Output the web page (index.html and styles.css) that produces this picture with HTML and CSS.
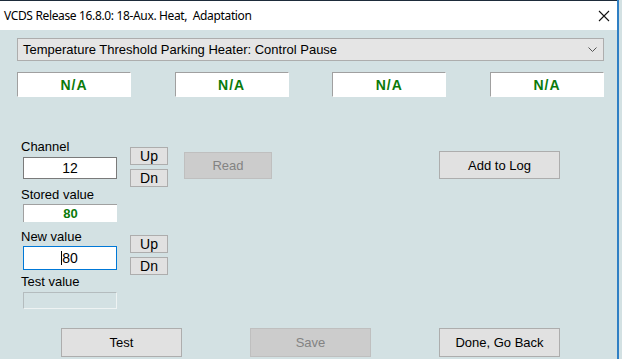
FILE: index.html
```html
<!DOCTYPE html>
<html>
<head>
<meta charset="utf-8">
<link rel="stylesheet" href="styles.css">
</head>
<body>
<div class="window">
  <div class="titlebar">
    <span class="title">VCDS Release 16.8.0: 18-Aux. Heat,&nbsp; Adaptation</span>
    <svg class="close" width="12" height="12" viewBox="0 0 12 12"><path d="M1 1 L11 11 M11 1 L1 11" stroke="#111" stroke-width="1.1" fill="none"/></svg>
  </div>
  <div class="client">
    <div class="combo">
      <span class="combo-text">Temperature Threshold Parking Heater: Control Pause</span>
      <svg class="chev" width="9" height="5" viewBox="0 0 9 5"><path d="M0.5 0.5 L4.5 4.5 L8.5 0.5" stroke="#555" stroke-width="1" fill="none"/></svg>
    </div>
    <div class="na-row">
      <div class="na">N/A</div>
      <div class="na">N/A</div>
      <div class="na">N/A</div>
      <div class="na">N/A</div>
    </div>
    <div class="controls">
      <div class="col-fields">
        <div class="label">Channel</div>
        <div class="edit">12</div>
        <div class="label lbl-stored">Stored value</div>
        <div class="static-val">80</div>
        <div class="label lbl-new">New value</div>
        <div class="edit focused"><span class="caret"></span>80</div>
        <div class="label lbl-test">Test value</div>
        <div class="edit disabled"></div>
      </div>
      <div class="col-spin">
        <button class="spin spin-up1">Up</button>
        <button class="spin spin-dn">Dn</button>
        <button class="spin spin-up2">Up</button>
        <button class="spin spin-dn">Dn</button>
      </div>
      <button class="btn btn-disabled read">Read</button>
      <button class="btn addlog">Add to Log</button>
    </div>
    <div class="bottom-row">
      <button class="btn big">Test</button>
      <button class="btn big btn-disabled">Save</button>
      <button class="btn big">Done, Go Back</button>
    </div>
  </div>
</div>
</body>
</html>
```
FILE: styles.css
```css
html, body {
  margin: 0;
  padding: 0;
  background: #d3e1e3;
}
body {
  width: 622px;
  height: 359px;
  overflow: hidden;
  font-family: "Liberation Sans", Arial, sans-serif;
  font-size: 13px;
  color: #000;
}
.window {
  width: 619px;
  height: 359px;
  box-sizing: border-box;
  border-right: 2px solid #2f7fc4;
  background: #d3e1e3;
  display: flex;
  flex-direction: column;
}
.titlebar {
  height: 30px;
  box-sizing: border-box;
  border-top: 1px solid #1d2b3a;
  background: #fff;
  display: flex;
  align-items: center;
  justify-content: space-between;
  padding: 0 7px 0 4px;
}
.title {
  font-family: "Noto Sans", "Open Sans", sans-serif;
  font-size: 12px;
  letter-spacing: -0.35px;
  color: #000;
  margin-top: -1px;
}
.close {
  display: block;
}
.client {
  flex: 1;
  padding: 8px 0 0 17px;
  display: flex;
  flex-direction: column;
}
.combo {
  width: 587px;
  height: 23px;
  box-sizing: border-box;
  border: 1px solid #adadad;
  background: #e5e5e5;
  display: flex;
  align-items: center;
  justify-content: space-between;
  padding: 0 6px 0 5px;
}
.combo-text {
  font-size: 13px;
}
.chev {
  display: block;
}
.na-row {
  width: 587px;
  margin-top: 11px;
  display: flex;
  justify-content: space-between;
}
.na {
  width: 114px;
  height: 25px;
  box-sizing: border-box;
  background: #fff;
  border-top: 1px solid #a0a0a0;
  border-left: 1px solid #a0a0a0;
  border-right: 1px solid #fff;
  border-bottom: 1px solid #fff;
  color: #0a7a0a;
  font-weight: bold;
  font-size: 14px;
  letter-spacing: 1px;
  display: flex;
  align-items: center;
  justify-content: center;
}
.controls {
  margin-top: 43px;
  margin-left: 4px;
  display: flex;
  align-items: flex-start;
}
.col-fields {
  width: 96px;
  display: flex;
  flex-direction: column;
}
.label {
  height: 14px;
  line-height: 14px;
  font-size: 13px;
}
.lbl-stored { margin-top: 9px; }
.lbl-new { margin-top: 8px; }
.lbl-test { margin-top: 5px; }
.edit {
  margin-left: 2px;
  margin-top: 3px;
  width: 94px;
  height: 22px;
  box-sizing: border-box;
  background: #fff;
  border: 1px solid #7a7a7a;
  display: flex;
  align-items: center;
  justify-content: center;
  font-size: 14px;
}
.edit.focused {
  margin-top: 2px;
  height: 24px;
  border-color: #0078d7;
}
.edit.disabled {
  margin-top: 3px;
  height: 17px;
  background: #d3e1e3;
  border-top: 1px solid #b4bcbe;
  border-left: 1px solid #b4bcbe;
  border-right: 1px solid #eef3f3;
  border-bottom: 1px solid #eef3f3;
}
.caret {
  display: inline-block;
  width: 1px;
  height: 14px;
  background: #000;
  margin-left: -1px;
}
.static-val {
  margin-left: 2px;
  margin-top: 2px;
  width: 94px;
  height: 18px;
  box-sizing: border-box;
  background: #fff;
  border-top: 1px solid #a0a0a0;
  border-left: 1px solid #a0a0a0;
  color: #0a7a0a;
  font-weight: bold;
  font-size: 13px;
  display: flex;
  align-items: center;
  justify-content: center;
}
.col-spin {
  margin-left: 13px;
  display: flex;
  flex-direction: column;
}
.spin {
  width: 38px;
  height: 18px;
  box-sizing: border-box;
  background: #e1e1e1;
  border: 1px solid #adadad;
  font-family: "Liberation Sans", Arial, sans-serif;
  font-size: 14px;
  padding: 0;
  margin: 4px 0 0 0;
  color: #000;
  line-height: 16px;
}
.spin-up1 { margin-top: 7px; }
.spin-up2 { margin-top: 48px; }
.btn {
  box-sizing: border-box;
  background: #e1e1e1;
  border: 1px solid #adadad;
  font-family: "Liberation Sans", Arial, sans-serif;
  font-size: 13px;
  color: #000;
  padding: 0;
  margin: 0;
}
.btn-disabled {
  background: #cccccc;
  border-color: #bfbfbf;
  color: #838383;
}
.read {
  margin-left: 16px;
  margin-top: 12px;
  width: 88px;
  height: 27px;
}
.addlog {
  margin-left: 167px;
  margin-top: 11px;
  width: 121px;
  height: 28px;
}
.bottom-row {
  margin-top: 19px;
  margin-left: 44px;
  display: flex;
  gap: 68px;
}
.big {
  width: 121px;
  height: 29px;
}
```
